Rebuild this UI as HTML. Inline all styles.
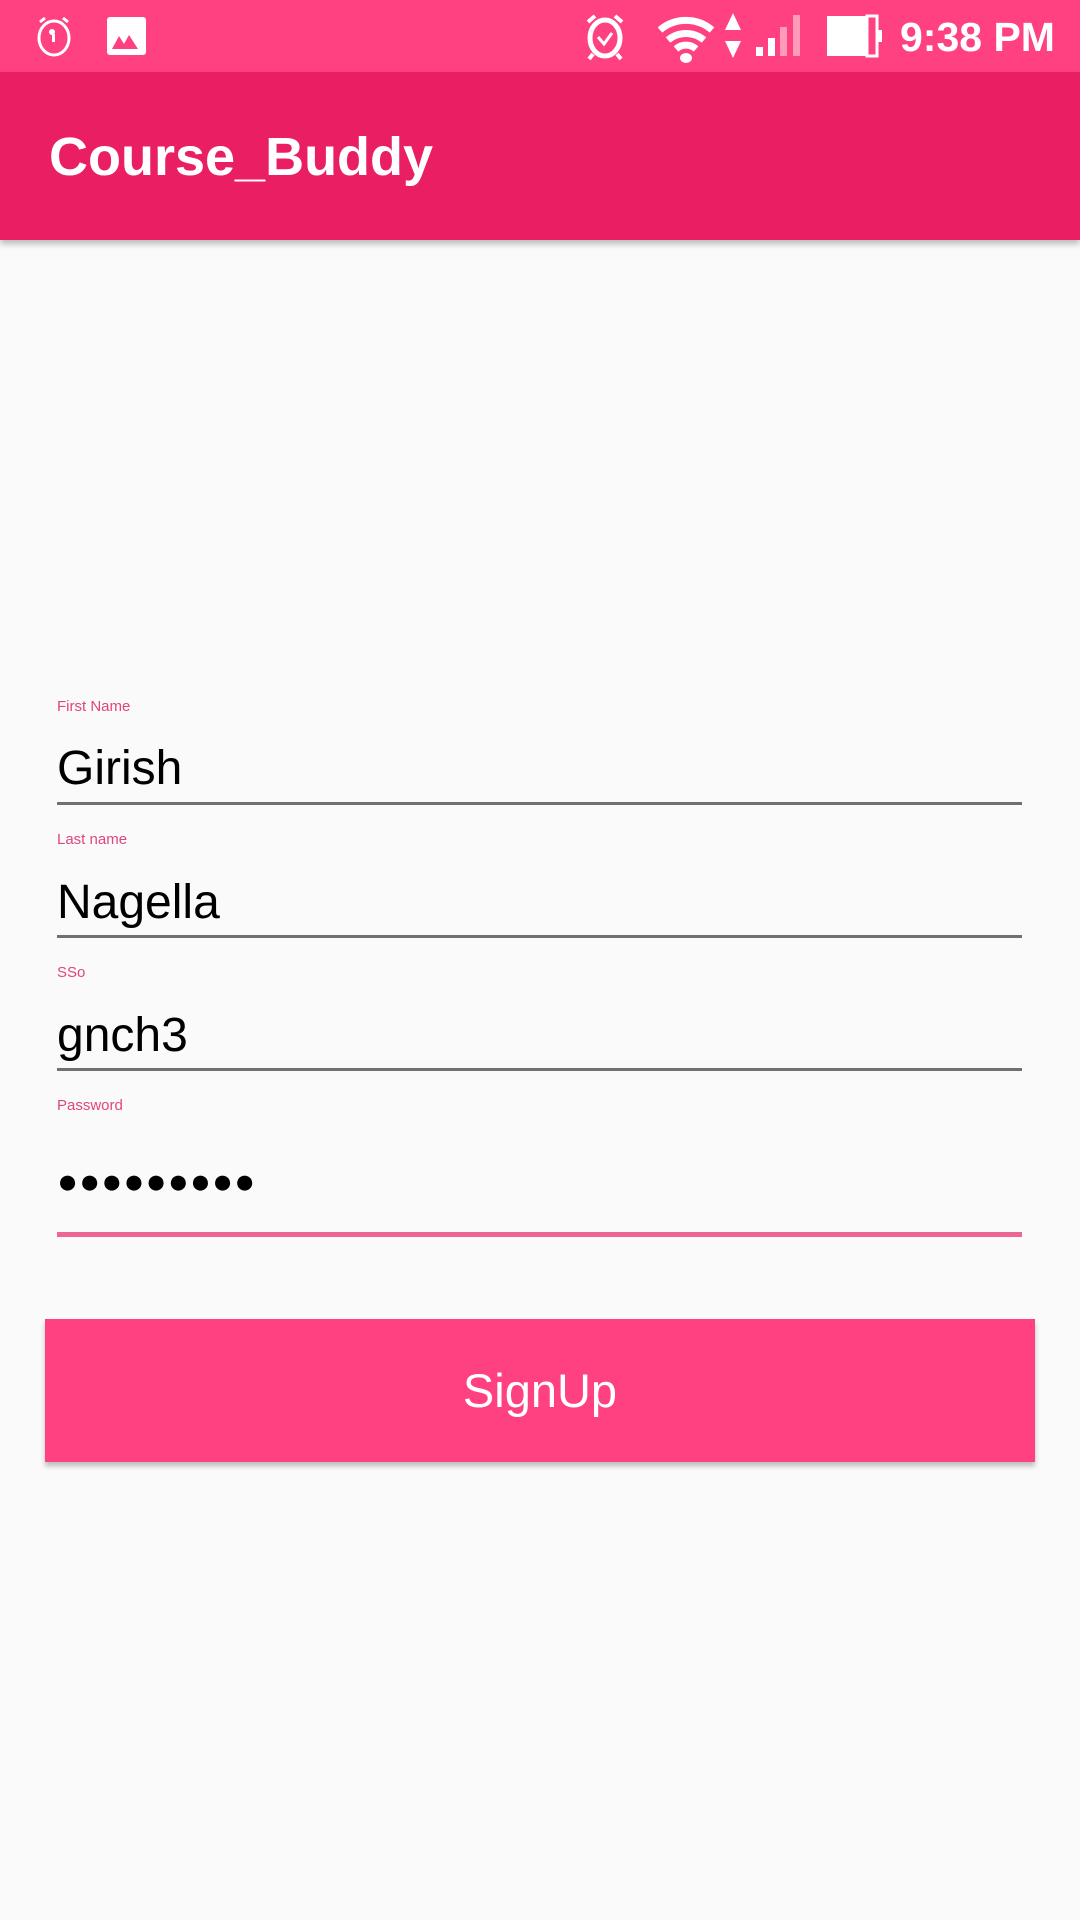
<!DOCTYPE html>
<html><head><meta charset="utf-8"><style>
body{margin:0;width:1080px;height:1920px;background:#fafafa;font-family:"Liberation Sans",sans-serif;position:relative;overflow:hidden}
.sb{position:absolute;left:0;top:0;width:1080px;height:72px;background:#FF4081}
.ab{position:absolute;left:0;top:72px;width:1080px;height:168px;background:#E91E63;box-shadow:0 4px 6px rgba(0,0,0,.25)}
.ab span{position:absolute;left:49px;top:54px;color:#fff;font-size:54px;font-weight:bold}
.lbl{position:absolute;left:57px;color:#e0457f;font-size:15px}
.val{position:absolute;left:57px;color:#000;font-size:48px}
.ln{position:absolute;left:57px;width:965px;height:3px;background:#707070}
.btn{position:absolute;left:45px;top:1319px;width:990px;height:143px;background:#FF4081;box-shadow:0 4px 5px rgba(0,0,0,.25);color:#fff;font-size:47px;text-align:center;line-height:143px}
</style></head><body>
<div class="sb">
<svg width="1080" height="72" style="position:absolute;left:0;top:0">
<g fill="none" stroke="#fff" stroke-width="3"><ellipse cx="54" cy="38" rx="15" ry="17"/></g>
<circle cx="52" cy="32" r="3" fill="#fff"/><rect x="52" y="34" width="3" height="8" fill="#fff"/>
<path d="M40 22l5-4M68 22l-5-4" stroke="#fff" stroke-width="3"/>
<rect x="107" y="17" width="39" height="38" rx="3" fill="#fff"/>
<path d="M112 49l7-13 5 8 5-9 9 14z" fill="#FF4081"/>
<ellipse cx="605" cy="38" rx="15" ry="18" fill="none" stroke="#fff" stroke-width="5"/>
<path d="M598 37l6 7 8-11" fill="none" stroke="#fff" stroke-width="3"/>
<path d="M588 22l7-6M622 22l-7-6M593 54l-4 5M617 54l4 5" stroke="#fff" stroke-width="4"/>
<path d="M660 30a40 40 0 0 1 52 0" fill="none" stroke="#fff" stroke-width="7"/>
<path d="M668 40a28 28 0 0 1 36 0" fill="none" stroke="#fff" stroke-width="7"/>
<path d="M676 49a15 15 0 0 1 20 0" fill="none" stroke="#fff" stroke-width="7"/>
<ellipse cx="686" cy="58" rx="6" ry="5" fill="#fff"/>
<path d="M733 13l-8 17h16zM733 58l-8-17h16z" fill="#fff"/>
<rect x="756" y="47" width="7" height="9" fill="#fff"/><rect x="768" y="38" width="7" height="18" fill="#fff"/>
<rect x="780" y="27" width="7" height="29" fill="#ff9ab9"/><rect x="793" y="15" width="7" height="41" fill="#ff9ab9"/>
<rect x="827" y="16" width="40" height="40" fill="#fff"/><rect x="867" y="16" width="10" height="40" fill="none" stroke="#fff" stroke-width="3"/><rect x="877" y="30" width="5" height="12" fill="#fff"/>
</svg>
<span style="position:absolute;left:900px;top:14px;color:#fff;font-size:41px;font-weight:bold">9:38 PM</span>
</div>
<div class="ab"><span>Course_Buddy</span></div>
<div class="lbl" style="top:698px">First Name</div>
<div class="val" style="top:741px">Girish</div>
<div class="ln" style="top:802px"></div>
<div class="lbl" style="top:831px">Last name</div>
<div class="val" style="top:875px">Nagella</div>
<div class="ln" style="top:935px"></div>
<div class="lbl" style="top:964px">SSo</div>
<div class="val" style="top:1008px">gnch3</div>
<div class="ln" style="top:1068px"></div>
<div class="lbl" style="top:1097px">Password</div>
<div class="val" style="top:1162px;font-size:35px;letter-spacing:1px">●●●●●●●●●</div>
<div class="ln" style="top:1232px;height:5px;background:#ec6593"></div>
<div class="btn">SignUp</div>
</body></html>
